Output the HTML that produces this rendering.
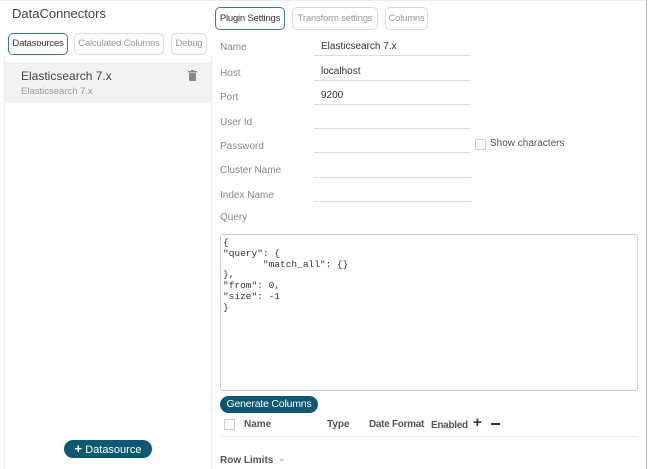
<!DOCTYPE html><html><head><style>
*{box-sizing:border-box;margin:0;padding:0}
body{width:649px;height:469px;background:#fff;font-family:"Liberation Sans",sans-serif;position:relative;overflow:hidden;color:#333}
.a{position:absolute;white-space:nowrap}
.tab{position:absolute;height:22px;border:1px solid #ddd;border-radius:5px;font-size:9.5px;color:#999;line-height:20px;text-align:center;white-space:nowrap;overflow:hidden;letter-spacing:-0.2px}
.tab.on{border:1.5px solid #3d7a8c;color:#333}
.lbl{position:absolute;left:220px;font-size:10px;color:#888}
.val{position:absolute;left:321px;font-size:10px;color:#333}
.ln{position:absolute;left:314px;width:157px;height:1px;background:#ddd}
.th{position:absolute;font-size:10px;font-weight:bold;color:#555;white-space:nowrap}
</style></head><body>
<div class="a" style="left:0;top:0;width:646px;height:1px;background:#eee"></div>
<div class="a" style="left:646px;top:0;width:1px;height:469px;background:#bbb"></div>
<div class="a" style="left:4px;top:56px;width:1px;height:413px;background:#eee"></div>
<div class="a" style="left:211px;top:56px;width:1px;height:413px;background:#eee"></div>
<div class="a" style="left:12px;top:6px;font-size:13px;color:#444">DataConnectors</div>
<div class="tab on" style="left:8px;top:33px;width:60px">Datasources</div>
<div class="tab" style="left:74px;top:33px;width:90px">Calculated Columns</div>
<div class="tab" style="left:171px;top:33px;width:36px">Debug</div>
<div class="a" style="left:5px;top:62px;width:206px;height:41px;background:#f2f2f2"></div>
<div class="a" style="left:21px;top:69px;font-size:12px;color:#444">Elasticsearch 7.x</div>
<div class="a" style="left:21px;top:86px;font-size:9.5px;color:#999">Elasticsearch 7.x</div>
<svg class="a" style="left:188px;top:70px" width="9" height="11" viewBox="0 0 9 11"><rect x="0" y="1" width="9" height="1.5" fill="#888"/><rect x="3" y="0" width="3" height="1.5" fill="#888"/><rect x="1" y="3" width="7" height="8" rx="1" fill="#888"/></svg>
<div class="a" style="left:64px;top:440px;width:88px;height:18px;border-radius:9px;background:#0f5872;color:#fff;font-size:11px;line-height:18px;text-align:center"><b style="font-size:13px">+</b> Datasource</div>

<div class="tab on" style="left:215px;top:7px;width:70px;height:23px;line-height:21px;color:#333">Plugin Settings</div>
<div class="tab" style="left:292px;top:7px;width:86px;height:23px;line-height:21px">Transform settings</div>
<div class="tab" style="left:385px;top:7px;width:43px;height:23px;line-height:21px">Columns</div>

<div class="lbl" style="top:42px">Name</div><div class="val" style="top:41px">Elasticsearch 7.x</div><div class="ln" style="top:55px"></div>
<div class="lbl" style="top:68px">Host</div><div class="val" style="top:66px">localhost</div><div class="ln" style="top:80px"></div>
<div class="lbl" style="top:92px">Port</div><div class="val" style="top:90px">9200</div><div class="ln" style="top:104px"></div>
<div class="lbl" style="top:117px">User Id</div><div class="ln" style="top:128px"></div>
<div class="lbl" style="top:141px">Password</div><div class="ln" style="top:152px"></div>
<div class="a" style="left:475px;top:139px;width:11px;height:11px;border:1px solid #ccc;border-radius:2px"></div>
<div class="a" style="left:490px;top:138px;font-size:10px;color:#555">Show characters</div>
<div class="lbl" style="top:165px">Cluster Name</div><div class="ln" style="top:177px"></div>
<div class="lbl" style="top:190px">Index Name</div><div class="ln" style="top:201px"></div>
<div class="lbl" style="top:212px">Query</div>
<div class="a" style="left:220px;top:234px;width:418px;height:157px;border:1px solid #ccc;border-radius:3px"></div>
<pre class="a" style="white-space:pre;left:223px;top:238px;font-family:'Liberation Mono',monospace;font-size:9.5px;line-height:10.8px;color:#333">{
"query": {
       "match_all": {}
},
"from": 0,
"size": -1
}</pre>
<div class="a" style="left:220px;top:396px;width:98px;height:17px;border-radius:9px;background:#0f5872;color:#fff;font-size:10.5px;line-height:17px;text-align:center;letter-spacing:-0.2px">Generate Columns</div>
<div class="a" style="left:224px;top:419px;width:11px;height:11px;border:1px solid #ccc"></div>
<div class="th" style="left:244px;top:419px">Name</div>
<div class="th" style="left:327px;top:419px">Type</div>
<div class="th" style="left:369px;top:419px;letter-spacing:-0.3px">Date Format</div>
<div class="th" style="left:431px;top:420px;letter-spacing:-0.3px">Enabled</div>
<div class="a" style="left:473px;top:414px;font-size:15px;font-weight:bold;color:#333">+</div>
<div class="a" style="left:491px;top:423px;width:9px;height:1.5px;background:#333"></div>
<div class="a" style="left:220px;top:436px;width:418px;height:1px;background:#eee"></div>
<div class="th" style="left:220px;top:455px">Row Limits</div>
<div class="a" style="left:278px;top:453px;font-size:9px;color:#999">&#8964;</div>
</body></html>
